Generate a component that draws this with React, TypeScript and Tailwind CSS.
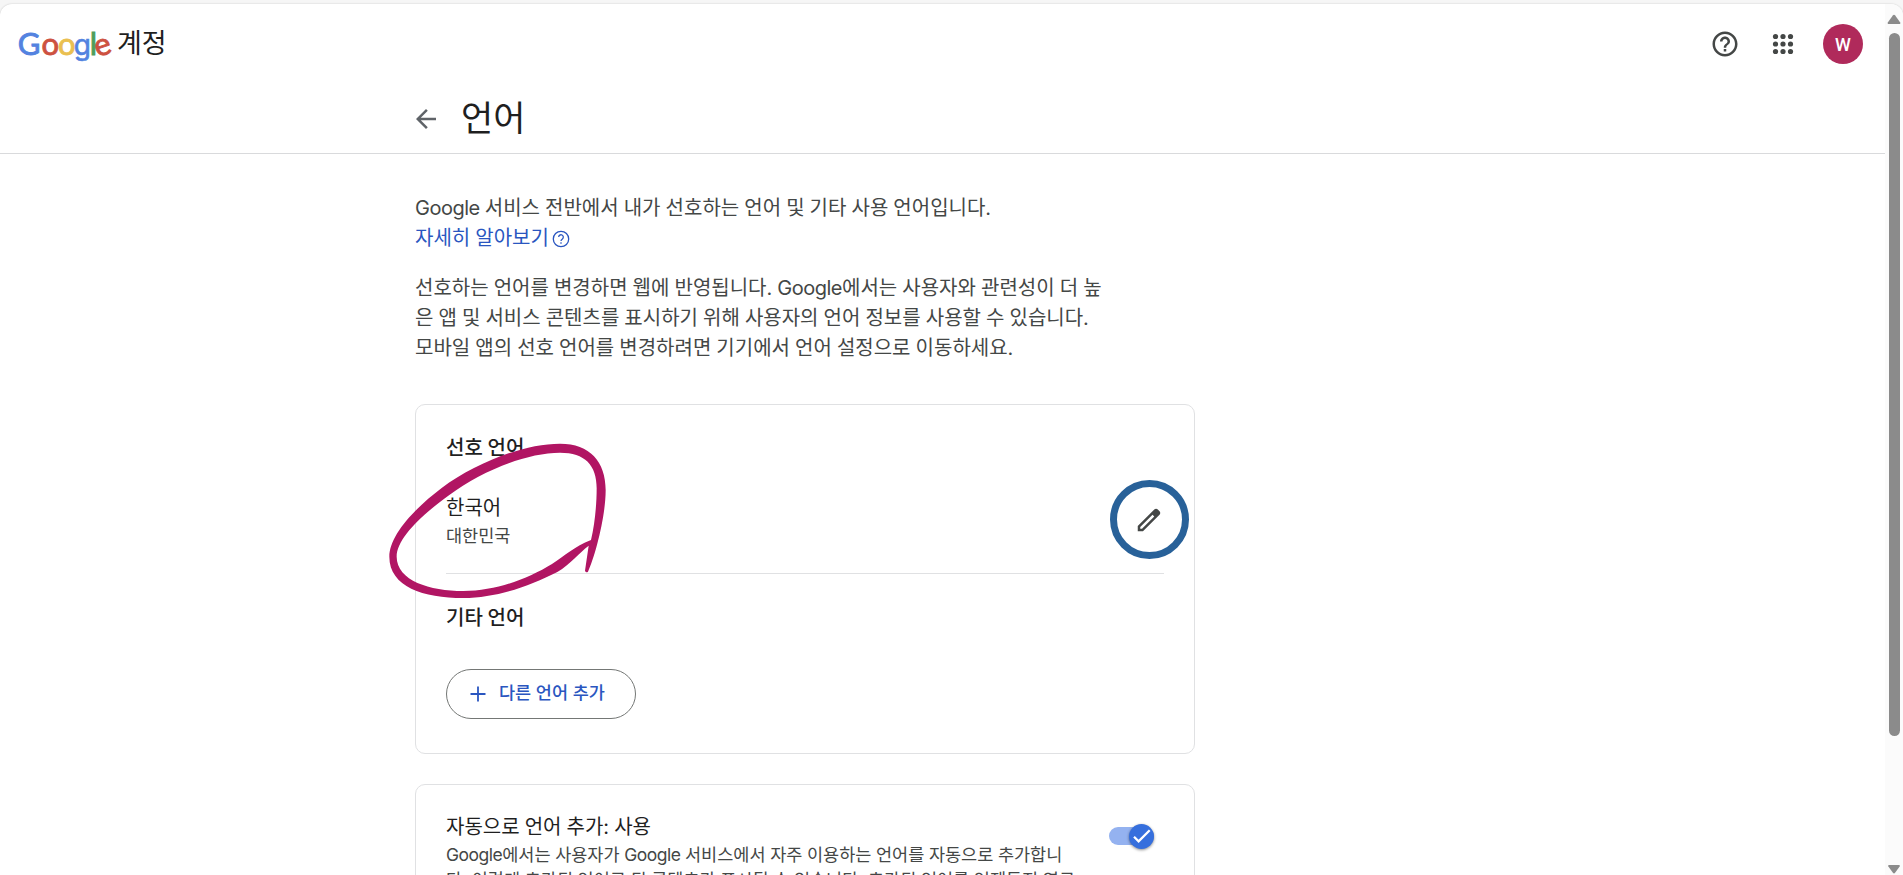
const Logo = () => (
  <svg width="96" height="44" viewBox="0 0 96 44" className="overflow-visible font-['Lato',sans-serif]" fontSize="31" strokeWidth="0.9">
    <text y="33" x="-0.3" fill="#5383e0" stroke="#5383e0">G</text>
    <text y="33" x="23.4" fill="#cd5140" stroke="#cd5140">o</text>
    <text y="33" x="39.9" fill="#eabf50" stroke="#eabf50">o</text>
    <text y="33" x="55.8" fill="#5383e0" stroke="#5383e0" strokeWidth="0.6" fontSize="28" className="font-['Inter',sans-serif]">g</text>
    <text y="33" x="71.8" fill="#4f9d5d" stroke="#4f9d5d">l</text>
    <text y="33" x="76.8" fill="#cd5140" stroke="#cd5140" transform="rotate(-18 85.5 25.5)">e</text>
  </svg>
);

const HelpIcon = () => (
  <svg width="30" height="30" viewBox="0 0 24 24" fill="#444746">
    <path d="M11 18h2v-2h-2v2zm1-16C6.48 2 2 6.48 2 12s4.48 10 10 10 10-4.48 10-10S17.52 2 12 2zm0 18c-4.41 0-8-3.59-8-8s3.59-8 8-8 8 3.59 8 8-3.59 8-8 8zm0-14c-2.21 0-4 1.79-4 4h2c0-1.1.9-2 2-2s2 .9 2 2c0 2-3 1.75-3 5h2c0-2.25 3-2.5 3-5 0-2.21-1.79-4-4-4z" />
  </svg>
);

const SmallHelpIcon = () => (
  <svg width="18" height="18" viewBox="0 0 18 18" fill="none" stroke="#2a56c0" strokeWidth="1.3">
    <circle cx="9" cy="9" r="7.7" />
    <path d="M6.7 7.1a2.3 2.3 0 1 1 3.7 1.8c-.9.7-1.4 1.1-1.4 2.2M9 12.3v1.5" />
  </svg>
);

const AppsIcon = () => (
  <svg width="30" height="30" viewBox="0 0 30 30" fill="#444746">
    {[7.5, 15, 22.5].map((y) => [7.5, 15, 22.5].map((x) => <circle key={`${x}-${y}`} cx={x} cy={y} r="2.6" />))}
  </svg>
);

const Header = () => (
  <header className="h-[150px] border-b border-[#d9dadc] flex flex-col">
    <div className="flex items-center justify-between pl-[18px] pr-[22px] h-20">
      <div className="flex items-center">
        <Logo />
        <span className="ml-[3px] mt-px text-[27px] leading-10 text-[#1f1f1f]">계정</span>
      </div>
      <div className="flex items-center">
        <HelpIcon />
        <div className="ml-7 mr-[25px]">
          <AppsIcon />
        </div>
        <div className="size-10 rounded-full bg-[#b02a5b] text-white font-['Roboto',sans-serif] text-[18px] font-medium pt-px flex items-center justify-center">W</div>
      </div>
    </div>
    <div className="flex items-center pl-[411px] h-[70px]">
      <svg className="mt-[2px]" width="30" height="30" viewBox="0 0 24 24" fill="#5f6368">
        <path d="M20 11H7.83l5.59-5.59L12 4l-8 8 8 8 1.41-1.41L7.83 13H20v-2z" />
      </svg>
      <h1 className="ml-5 text-[35px] leading-[44px] text-[#1f1f1f]">언어</h1>
    </div>
  </header>
);

const Google = () => <span className="tracking-[-0.5px]">Google</span>;

const Toggle = () => (
  <div className="w-[45px] h-[26px] flex items-center">
    <div className="w-[45px] h-[18px] rounded-full bg-[#94b2f0] flex items-center justify-end">
      <div className="size-[25px] rounded-full bg-[#366fdd] shadow-[0_1px_3px_rgba(0,0,0,0.45)] flex items-center justify-center shrink-0">
        <svg width="20" height="20" viewBox="0 0 20 20" fill="none" stroke="#fff" strokeWidth="2.3">
          <path d="M2 10.8l4.6 4.5L17.7 4.2" />
        </svg>
      </div>
    </div>
  </div>
);

const Scrollbar = () => (
  <div className="w-[18px] bg-[#fbfbfb] flex flex-col items-center rounded-tr-[12px] pt-[10px] h-[871px]">
    <svg width="14" height="11" viewBox="0 0 14 11" fill="#8b8b8b">
      <path d="M1.2 10h11.6q1-.5.4-1.6L8.2 1.4Q7 0 5.8 1.4L.8 8.4Q.2 9.5 1.2 10z" />
    </svg>
    <div className="mt-2 w-[11px] h-[703px] rounded-full bg-[#8b8b8b]" />
    <svg className="mt-[129px]" width="14" height="10" viewBox="0 0 14 11" fill="#8b8b8b">
      <path d="M1.2 0h11.6q1 .5.4 1.6L8.2 8.6Q7 10 5.8 8.6L.8 1.6Q.2.5 1.2 0z" />
    </svg>
  </div>
);

export default function App() {
  return (
    <div className="h-[875px] overflow-hidden bg-[#f6f6f6] pt-1 font-['Inter','Noto_Sans_CJK_KR',sans-serif]">
      <div className="flex h-[871px] rounded-t-[12px] bg-white shadow-[0_0_2px_rgba(0,0,0,0.2)]">
        <div className="flex-1 min-w-0">
          <Header />
          <main className="ml-[415px] w-[780px] pt-[39px] [word-spacing:-0.55px]">
            <div className="text-[20px] leading-[30px] text-[#444746] whitespace-nowrap">
              <p>
                <Google /> 서비스 전반에서 내가 선호하는 언어 및 기타 사용 언어입니다.
              </p>
              <a className="flex items-center text-[#2a56c0]">
                자세히 알아보기
                <span className="ml-[3px] mt-px">
                  <SmallHelpIcon />
                </span>
              </a>
              <p className="mt-5">
                선호하는 언어를 변경하면 웹에 반영됩니다. <Google />에서는 사용자와 관련성이 더 높
                <br />
                은 앱 및 서비스 콘텐츠를 표시하기 위해 사용자의 언어 정보를 사용할 수 있습니다.
                <br />
                모바일 앱의 선호 언어를 변경하려면 기기에서 언어 설정으로 이동하세요.
              </p>
            </div>

            <section className="relative mt-[41px] h-[350px] rounded-[10px] border border-[#e0e1e3] px-[30px] pt-[28px]">
              <h2 className="text-[20px] leading-[30px] font-medium text-[#1f1f1f]">선호 언어</h2>
              <div className="mt-[21px] h-[90px] flex items-start justify-between border-b border-[#e0e1e3]">
                <div className="pt-[9px]">
                  <div className="text-[20px] leading-[30px] text-[#1f1f1f]">한국어</div>
                  <div className="text-[17.5px] leading-[26px] text-[#444746]">대한민국</div>
                </div>
                <button className="-mr-[25px] mt-[-4px] size-[79px] shrink-0 rounded-full border-[7px] border-[#286199] flex items-center justify-center pr-[2px]">
                  <svg width="30" height="30" viewBox="0 0 24 24" fill="#444746">
                    <path d="M20.41 4.94l-1.35-1.35c-.78-.78-2.05-.78-2.83 0L3 16.82V21h4.18L20.41 7.77c.79-.78.79-2.05 0-2.83zM6.41 19.06L5 19v-1.36l9.82-9.82 1.41 1.41z" />
                  </svg>
                </button>
              </div>
              <h2 className="mt-[29px] text-[20px] leading-[30px] font-medium text-[#1f1f1f]">기타 언어</h2>
              <button className="mt-[36px] h-[50px] w-[190px] rounded-full border border-[#747775] flex items-center pl-[21px] text-[17.5px] font-medium text-[#2a56c0]">
                <svg width="20" height="20" viewBox="0 0 20 20" fill="none" stroke="#2a56c0" strokeWidth="1.8">
                  <path d="M10 2.5v15M2.5 10h15" />
                </svg>
                <span className="ml-[11px] -mt-[2px]">다른 언어 추가</span>
              </button>
              {/* Hand-drawn marker over the preferred language */}
              <svg className="absolute left-[-36px] top-[-15px]" width="260" height="220" viewBox="0 0 780 660" fill="#b11563">
                <path
                  fillRule="evenodd"
                  d="M624 545C645 500 677 380 677 300C677 215 630 161 540 161C430 161 285 220 185 294C95 362 28 440 28 500C28 590 130 624 250 624C350 624 450 588 532 546C572 522 598 488 626 467L615 542Q618 550 624 545ZM633 450C645 400 650 340 650 295C650 225 615 188 540 188C440 188 305 243 208 315C118 380 50 448 50 500C50 572 150 603 250 603C350 603 446 565 516 522C556 496 583 470 633 450Z"
                />
              </svg>
            </section>

            <section className="mt-[30px] h-[300px] rounded-[10px] border border-[#e0e1e3] px-[30px] pt-[28px] flex justify-between">
              <div className="whitespace-nowrap">
                <div className="text-[20px] leading-[29px] text-[#1f1f1f]">자동으로 언어 추가: 사용</div>
                <p className="text-[17.5px] leading-[25px] text-[#444746] [word-spacing:-0.3px]">
                  <Google />에서는 사용자가 <Google /> 서비스에서 자주 이용하는 언어를 자동으로 추가합니
                  <br />
                  다. 이렇게 추가된 언어로 된 콘텐츠가 표시될 수 있습니다. 추가된 언어를 언제든지 영구
                </p>
              </div>
              <div className="mr-[10px] mt-[10px]">
                <Toggle />
              </div>
            </section>
          </main>
        </div>
        <Scrollbar />
      </div>
    </div>
  );
}
